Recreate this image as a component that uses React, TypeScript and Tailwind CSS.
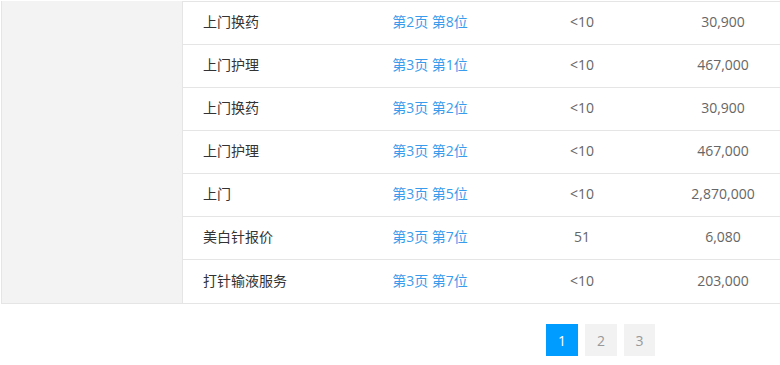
import React from 'react';

const ROWS = [
  { word: '上门换药', rank: '第2页 第8位', index: '<10', volume: '30,900' },
  { word: '上门护理', rank: '第3页 第1位', index: '<10', volume: '467,000' },
  { word: '上门换药', rank: '第3页 第2位', index: '<10', volume: '30,900' },
  { word: '上门护理', rank: '第3页 第2位', index: '<10', volume: '467,000' },
  { word: '上门', rank: '第3页 第5位', index: '<10', volume: '2,870,000' },
  { word: '美白针报价', rank: '第3页 第7位', index: '51', volume: '6,080' },
  { word: '打针输液服务', rank: '第3页 第7位', index: '<10', volume: '203,000' },
];

const App: React.FC = () => {
  return (
    <div
      className="w-[780px] h-[365px] overflow-hidden bg-white text-[14px]"
      style={{ fontFamily: '"Open Sans", "Noto Sans CJK SC", sans-serif' }}
    >
      <div className="flex ml-px pt-px border-b border-[#e5e5e5]">
        {/* Side panel */}
        <div className="w-[182px] shrink-0 bg-[#f3f3f3] border-l border-r border-[#e5e5e5]" />

        {/* Keyword table */}
        <div className="flex-1 border-t border-[#e5e5e5] overflow-hidden">
          {ROWS.map((row, idx) => (
            <div
              key={idx}
              className={`flex items-center h-[43px] pb-[3px] w-[604px] ${idx < ROWS.length - 1 ? 'border-b border-[#e5e5e5]' : ''}`}
            >
              <div className="w-[172px] pl-[20px] text-[#333]">{row.word}</div>
              <div className="w-[150px] text-center text-[#3a9cec]">{row.rank}</div>
              <div className="w-[154px] text-center text-[#666]">{row.index}</div>
              <div className="w-[128px] text-center text-[#666]">{row.volume}</div>
            </div>
          ))}
        </div>
      </div>

      {/* Pagination */}
      <div className="flex gap-[7px] pl-[546px] pt-[20px]">
        <button className="w-[32px] h-[32px] bg-[#009cff] text-white">1</button>
        <button className="w-[32px] h-[32px] bg-[#f2f2f2] text-[#999]">2</button>
        <button className="w-[31px] h-[32px] bg-[#f2f2f2] text-[#999]">3</button>
      </div>
    </div>
  );
};

export default App;
